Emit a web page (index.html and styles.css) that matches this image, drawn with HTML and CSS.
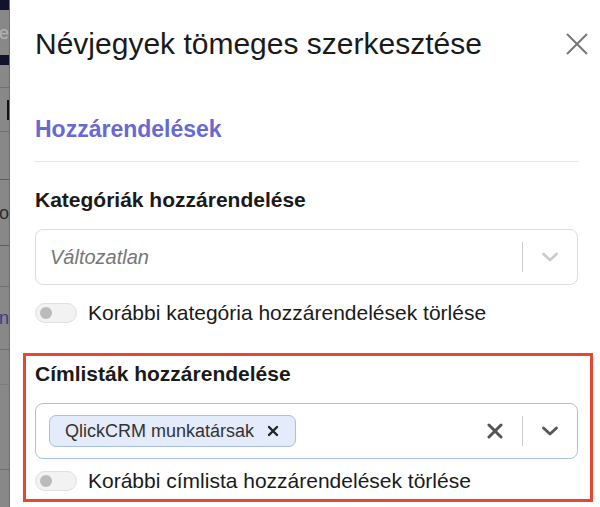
FILE: index.html
```html
<!DOCTYPE html>
<html lang="hu">
<head>
    <meta charset="UTF-8">
    <meta name="viewport" content="width=device-width, initial-scale=1.0">
    <title>Névjegyek tömeges szerkesztése</title>
    <link rel="stylesheet" href="styles.css">
</head>
<body>
    <div class="page">
        <div class="backdrop">
            <div class="bd-row bd-nav"></div>
            <div class="bd-row bd-text h45">e</div>
            <div class="bd-row bd-nav h10"></div>
            <div class="bd-row h23 line"></div>
            <div class="bd-row h44 line"><span class="bd-bar"></span></div>
            <div class="bd-row h48 line-blue"></div>
            <div class="bd-row bd-dark h66 line-blue">o</div>
            <div class="bd-row h41 line"></div>
            <div class="bd-row bd-link h63 line">n</div>
            <div class="bd-row h35 line-faint"></div>
            <div class="bd-row h85 line"></div>
        </div>

        <div class="modal">
            <div class="modal-header">
                <h1>Névjegyek tömeges szerkesztése</h1>
                <button class="close-btn" aria-label="Bezárás">
                    <svg width="22" height="22" viewBox="0 0 22 22">
                        <path d="M1 1L21 21M21 1L1 21" stroke="#777" stroke-width="2" fill="none"/>
                    </svg>
                </button>
            </div>

            <h2 class="section-title">Hozzárendelések</h2>

            <div class="field">
                <label class="field-label">Kategóriák hozzárendelése</label>
                <div class="select">
                    <div class="select-value placeholder">Változatlan</div>
                    <div class="select-sep"></div>
                    <div class="select-icon">
                        <svg width="20" height="20" viewBox="0 0 20 20">
                            <path d="M3.5 7L10 13L16.5 7" stroke="#ccc" stroke-width="2.8" fill="none" stroke-linecap="round" stroke-linejoin="round"/>
                        </svg>
                    </div>
                </div>
                <div class="toggle-row">
                    <span class="toggle"><span class="knob"></span></span>
                    <span>Korábbi kategória hozzárendelések törlése</span>
                </div>
            </div>

            <div class="field highlighted">
                <label class="field-label">Címlisták hozzárendelése</label>
                <div class="select focused">
                    <div class="select-value">
                        <span class="chip">QlickCRM munkatársak
                            <svg width="12" height="12" viewBox="0 0 12 12">
                                <path d="M2 2L10 10M10 2L2 10" stroke="#222" stroke-width="2.4" fill="none" stroke-linecap="round"/>
                            </svg>
                        </span>
                    </div>
                    <div class="select-icon">
                        <svg width="16" height="16" viewBox="0 0 16 16">
                            <path d="M2 2L14 14M14 2L2 14" stroke="#555" stroke-width="3" fill="none" stroke-linecap="round"/>
                        </svg>
                    </div>
                    <div class="select-sep"></div>
                    <div class="select-icon">
                        <svg width="20" height="20" viewBox="0 0 20 20">
                            <path d="M3.5 7L10 13L16.5 7" stroke="#555" stroke-width="2.8" fill="none" stroke-linecap="round" stroke-linejoin="round"/>
                        </svg>
                    </div>
                </div>
                <div class="toggle-row">
                    <span class="toggle"><span class="knob"></span></span>
                    <span>Korábbi címlista hozzárendelések törlése</span>
                </div>
            </div>
        </div>
    </div>
</body>
</html>
```

FILE: styles.css
```css
body {
    margin: 0;
    font-family: "Liberation Sans", Arial, sans-serif;
    color: #1a1a1a;
    background-color: #fff;
}
.page {
    display: flex;
    height: 507px;
    overflow: hidden;
}
.backdrop {
    width: 9px;
    flex-shrink: 0;
    background-color: #888;
    border-right: 1px solid #6d6d6d;
    overflow: hidden;
}
.bd-row {
    box-sizing: border-box;
    font-size: 18px;
    line-height: 1;
    display: flex;
    align-items: center;
    justify-content: flex-end;
    overflow: hidden;
    white-space: nowrap;
}
.bd-nav {
    height: 10px;
    background-color: #13122e;
}
.bd-text {
    color: #b3b3b3;
}
.bd-dark {
    color: #2b2b2b;
}
.bd-link {
    color: #3d3a8a;
}
.bd-bar {
    width: 2px;
    height: 20px;
    background-color: #111;
}
.h10 { height: 10px; }
.h23 { height: 23px; }
.h35 { height: 35px; }
.h41 { height: 41px; }
.h44 { height: 44px; }
.h45 { height: 45px; }
.h48 { height: 48px; }
.h63 { height: 63px; }
.h66 { height: 66px; }
.h85 { height: 85px; }
.line { border-bottom: 1px solid #6f6f6f; }
.line-blue { border-bottom: 1px solid #5a5a78; }
.line-faint { border-bottom: 1px solid #7c7c7c; }

.modal {
    flex: 1;
    padding: 0 22px 0 25px;
}
.modal-header {
    display: flex;
    align-items: center;
    justify-content: space-between;
    padding-top: 27px;
}
h1 {
    margin: 0;
    font-size: 30px;
    font-weight: normal;
    line-height: 34px;
    color: #1a1a1a;
}
.close-btn {
    background: none;
    border: none;
    padding: 0;
    margin-right: -10px;
    cursor: pointer;
    display: flex;
}
.section-title {
    margin: 55px 0 0;
    font-size: 23px;
    line-height: 26px;
    color: #6669d6;
    padding-bottom: 19px;
    border-bottom: 1px solid #e5e5e5;
}
.field {
    margin-top: 26px;
}
.field-label {
    display: block;
    font-size: 21px;
    font-weight: bold;
    line-height: 24px;
    margin-bottom: 17px;
}
.select {
    display: flex;
    align-items: center;
    height: 56px;
    box-sizing: border-box;
    border: 1px solid #ddd;
    border-radius: 8px;
    padding-left: 13px;
}
.select.focused {
    border-color: #a9c0ec;
}
.select-value {
    flex: 1;
    font-size: 20px;
}
.placeholder {
    font-style: italic;
    color: #777;
    padding-left: 1px;
}
.select-sep {
    width: 1px;
    height: 30px;
    background-color: #ccc;
}
.select-icon {
    width: 54px;
    display: flex;
    justify-content: center;
    align-items: center;
}
.chip {
    display: inline-flex;
    align-items: center;
    gap: 13px;
    height: 32px;
    box-sizing: border-box;
    padding: 0 16px 0 15px;
    background-color: #e4ebfb;
    border: 1px solid #a9bde8;
    border-radius: 7px;
    font-size: 18px;
    color: #333;
}
.toggle-row {
    display: flex;
    align-items: center;
    gap: 11px;
    margin-top: 16px;
    font-size: 21px;
    line-height: 24px;
}
.toggle {
    width: 42px;
    height: 20px;
    box-sizing: border-box;
    border: 1px solid #e0e0e0;
    border-radius: 10px;
    background-color: #f2f2f2;
    display: flex;
    align-items: center;
    padding-left: 4px;
}
.knob {
    width: 12px;
    height: 12px;
    border-radius: 50%;
    background-color: #bbb;
}
.highlighted {
    margin: 28px -15px 0 -12px;
    padding: 6px 12px 6px 9px;
    border: 3px solid #e8472f;
}
.highlighted .toggle-row {
    margin-top: 10px;
}
```
